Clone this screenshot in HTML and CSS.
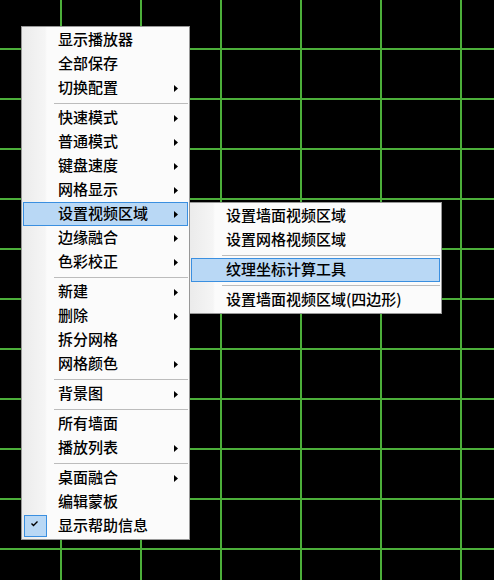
FILE: index.html
```html
<!DOCTYPE html>
<html lang="zh-CN">
<head>
<meta charset="utf-8">
<title>Context menu</title>
<link rel="stylesheet" href="styles.css">
</head>
<body>
<div class="canvas">
  <div class="menu main-menu">
    <div class="item"><span class="icon"></span><span class="label">显示播放器</span></div>
    <div class="item"><span class="icon"></span><span class="label">全部保存</span></div>
    <div class="item"><span class="icon"></span><span class="label">切换配置</span><svg class="arrow" viewBox="0 0 4 7"><polygon points="0,0 4,3.5 0,7"/></svg></div>
    <div class="sep"></div>
    <div class="item"><span class="icon"></span><span class="label">快速模式</span><svg class="arrow" viewBox="0 0 4 7"><polygon points="0,0 4,3.5 0,7"/></svg></div>
    <div class="item"><span class="icon"></span><span class="label">普通模式</span><svg class="arrow" viewBox="0 0 4 7"><polygon points="0,0 4,3.5 0,7"/></svg></div>
    <div class="item"><span class="icon"></span><span class="label">键盘速度</span><svg class="arrow" viewBox="0 0 4 7"><polygon points="0,0 4,3.5 0,7"/></svg></div>
    <div class="item"><span class="icon"></span><span class="label">网格显示</span><svg class="arrow" viewBox="0 0 4 7"><polygon points="0,0 4,3.5 0,7"/></svg></div>
    <div class="item hot"><span class="icon"></span><span class="label">设置视频区域</span><svg class="arrow" viewBox="0 0 4 7"><polygon points="0,0 4,3.5 0,7"/></svg></div>
    <div class="item"><span class="icon"></span><span class="label">边缘融合</span><svg class="arrow" viewBox="0 0 4 7"><polygon points="0,0 4,3.5 0,7"/></svg></div>
    <div class="item"><span class="icon"></span><span class="label">色彩校正</span><svg class="arrow" viewBox="0 0 4 7"><polygon points="0,0 4,3.5 0,7"/></svg></div>
    <div class="sep"></div>
    <div class="item"><span class="icon"></span><span class="label">新建</span><svg class="arrow" viewBox="0 0 4 7"><polygon points="0,0 4,3.5 0,7"/></svg></div>
    <div class="item"><span class="icon"></span><span class="label">删除</span><svg class="arrow" viewBox="0 0 4 7"><polygon points="0,0 4,3.5 0,7"/></svg></div>
    <div class="item"><span class="icon"></span><span class="label">拆分网格</span></div>
    <div class="item"><span class="icon"></span><span class="label">网格颜色</span><svg class="arrow" viewBox="0 0 4 7"><polygon points="0,0 4,3.5 0,7"/></svg></div>
    <div class="sep"></div>
    <div class="item"><span class="icon"></span><span class="label">背景图</span><svg class="arrow" viewBox="0 0 4 7"><polygon points="0,0 4,3.5 0,7"/></svg></div>
    <div class="sep"></div>
    <div class="item"><span class="icon"></span><span class="label">所有墙面</span></div>
    <div class="item"><span class="icon"></span><span class="label">播放列表</span><svg class="arrow" viewBox="0 0 4 7"><polygon points="0,0 4,3.5 0,7"/></svg></div>
    <div class="sep"></div>
    <div class="item"><span class="icon"></span><span class="label">桌面融合</span><svg class="arrow" viewBox="0 0 4 7"><polygon points="0,0 4,3.5 0,7"/></svg></div>
    <div class="item"><span class="icon"></span><span class="label">编辑蒙板</span></div>
    <div class="item"><span class="icon checked"><svg class="check" viewBox="0 0 21 20"><polyline points="6.5,7.5 8.5,9.5 12.5,5.5"/></svg></span><span class="label">显示帮助信息</span></div>
  </div>

  <div class="menu sub-menu">
    <div class="item"><span class="icon"></span><span class="label">设置墙面视频区域</span></div>
    <div class="item"><span class="icon"></span><span class="label">设置网格视频区域</span></div>
    <div class="sep"></div>
    <div class="item hot"><span class="icon"></span><span class="label">纹理坐标计算工具</span></div>
    <div class="sep"></div>
    <div class="item"><span class="icon"></span><span class="label">设置墙面视频区域(四边形)</span></div>
  </div>
</div>
</body>
</html>
```

FILE: styles.css
```css
html, body {
  margin: 0;
  padding: 0;
  background: #000;
}

.canvas {
  position: relative;
  width: 494px;
  height: 580px;
  overflow: hidden;
  background-color: #000;
  background-image:
    linear-gradient(to right, #4caf3a 0, #4caf3a 2px, transparent 2px),
    linear-gradient(to bottom, #4caf3a 0, #4caf3a 2px, transparent 2px);
  background-size: 80px 50px, 80px 50px;
  background-position: 60px 48px, 60px 48px;
  font-family: "Noto Sans CJK SC", "Microsoft YaHei", sans-serif;
  font-size: 15px;
  font-weight: 500;
  color: #000;
}

.menu {
  position: absolute;
  box-sizing: border-box;
  border: 1px solid #979797;
  padding: 1px 0;
  background-color: #fbfbfb;
  background-image: linear-gradient(to right, #ebebeb 0, #f5f5f5 23px, #fbfbfb 25px);
  background-repeat: no-repeat;
  background-size: 25px 100%;
  background-position: 0 0;
}

.main-menu {
  left: 21px;
  top: 26px;
  width: 169px;
}

.sub-menu {
  left: 189px;
  top: 202px;
  width: 253px;
}

.item {
  display: flex;
  align-items: center;
  box-sizing: border-box;
  height: 24px;
  margin: 0 1px;
  border: 1px solid transparent;
  padding-right: 9px;
  white-space: nowrap;
}

.item.hot {
  background: #b9d8f5;
  border-color: #3a8fe0;
}

.icon {
  flex: none;
  box-sizing: border-box;
  width: 23px;
  height: 22px;
}

.icon.checked {
  background: #b9d8f5;
  border: 1px solid #3a8fe0;
}

.check {
  display: block;
  width: 21px;
  height: 20px;
  fill: none;
  stroke: #000;
  stroke-width: 1.4;
}

.label {
  flex: 1;
  margin-left: 11px;
  line-height: 20px;
  padding-bottom: 2px;
}

.arrow {
  flex: none;
  width: 4px;
  height: 7px;
  fill: #000;
}

.sep {
  height: 1px;
  margin: 3px 1px 2px 32px;
  background: #bcbcbc;
}
```
